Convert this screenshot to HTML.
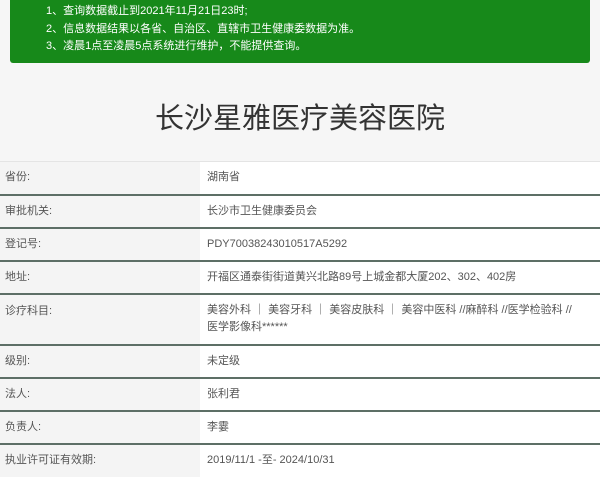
<!DOCTYPE html>
<html><head><meta charset="utf-8"><style>
*{margin:0;padding:0;box-sizing:border-box}
body{width:600px;height:475px;overflow:hidden;background:#f6f6f6;font-family:"Liberation Sans","Noto Sans CJK SC",sans-serif;color:#444;font-size:11px}
.notice{position:absolute;left:10px;top:0;width:580px;height:63px;background:#17891a;border-radius:0 0 3px 3px;color:#fff;font-size:11px;line-height:17.5px;padding:3px 0 0 36px}
h1{position:absolute;top:95px;left:0;width:600px;text-align:center;font-weight:normal;font-size:29px;color:#333}
table{position:absolute;top:161px;left:0;width:600px;border-collapse:collapse}
td{border-top:2px solid #5d6f66;height:33px;vertical-align:middle;line-height:17px}
tr:first-child td{border-top:1px solid #e4e4e4}
td.l{width:200px;background:#f4f4f4;padding-left:5px;color:#555}
td.v{background:#fff;padding-left:7px;color:#555}
</style></head><body>
<div class="notice">1、查询数据截止到2021年11月21日23时;<br>2、信息数据结果以各省、自治区、直辖市卫生健康委数据为准。<br>3、凌晨1点至凌晨5点系统进行维护，不能提供查询。</div>
<h1>长沙星雅医疗美容医院</h1>
<table>
<tr><td class="l">省份:</td><td class="v">湖南省</td></tr>
<tr><td class="l">审批机关:</td><td class="v">长沙市卫生健康委员会</td></tr>
<tr><td class="l">登记号:</td><td class="v">PDY70038243010517A5292</td></tr>
<tr><td class="l">地址:</td><td class="v">开福区通泰街街道黄兴北路89号上城金都大厦202、302、402房</td></tr>
<tr><td class="l" style="height:51px;vertical-align:top;padding-top:8px">诊疗科目:</td><td class="v" style="vertical-align:top;padding-top:7px">美容外科 ｜ 美容牙科 ｜ 美容皮肤科 ｜ 美容中医科 //麻醉科 //医学检验科 //<br>医学影像科******</td></tr>
<tr><td class="l">级别:</td><td class="v">未定级</td></tr>
<tr><td class="l">法人:</td><td class="v">张利君</td></tr>
<tr><td class="l">负责人:</td><td class="v">李霎</td></tr>
<tr><td class="l">执业许可证有效期:</td><td class="v">2019/11/1 -至- 2024/10/31</td></tr>
</table>
</body></html>
